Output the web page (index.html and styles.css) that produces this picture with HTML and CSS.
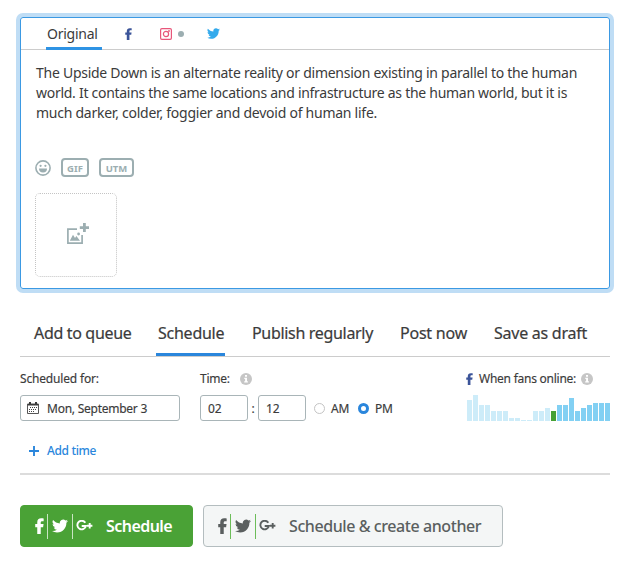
FILE: index.html
```html
<!DOCTYPE html>
<html lang="en">
<head>
<meta charset="utf-8">
<title>Schedule post</title>
<link rel="stylesheet" href="styles.css">
</head>
<body>
<svg class="defs" aria-hidden="true">
  <symbol id="fb" viewBox="0 0 8 14"><path d="M2 14V8H.2V5.200H2V3.700C2 1.400 3.300.2 5.500.2c1 0 1.800.1 2.200.15V2.700H6.400c-1 0-1.300.5-1.300 1.250V5.200h2.500L7.200 8H5.100v6z"/></symbol>
  <symbol id="tw" viewBox="0 0 24 20"><path d="M23.950 2.570a10 10 0 0 1-2.820.77 4.960 4.960 0 0 0 2.160-2.720c-.95.550-2 .95-3.130 1.190a4.920 4.920 0 0 0-8.380 4.480C7.690 6.090 4.070 4.130 1.640 1.160a4.920 4.920 0 0 0 1.520 6.570 4.900 4.900 0 0 1-2.230-.61v.06a4.920 4.920 0 0 0 3.950 4.830 5 5 0 0 1-2.210.08 4.940 4.940 0 0 0 4.600 3.420A9.870 9.870 0 0 1 0 17.540a13.990 13.990 0 0 0 7.550 2.210c9.050 0 14-7.500 14-13.980 0-.21 0-.42-.02-.63a9.940 9.940 0 0 0 2.420-2.570z"/></symbol>
  <symbol id="gp" viewBox="0 0 17 12"><path d="M9.300 2.700A4.300 4.300 0 1 0 9.900 6H5.700M13.700 3v5.400M11 5.700h5.400" fill="none" stroke="currentColor" stroke-width="1.900"/></symbol>
  <symbol id="info" viewBox="0 0 12 12"><circle cx="6" cy="6" r="6" fill="#c6c6c6"/><path d="M5 2h2v1.700H5zM4.300 4.800H7v3.500h.9v1.300H4.200V8.300h.9V6.100h-.8z" fill="#fff"/></symbol>
</svg>
<section class="composer">
  <nav class="networks">
    <span class="network">Original</span>
    <svg class="n-fb"><use href="#fb"/></svg>
    <svg class="n-ig" viewBox="0 0 12 12"><rect x=".6" y=".6" width="10.800" height="10.800" rx="1.300"/><circle cx="6" cy="6" r="2.600"/><circle cx="9" cy="3" r=".35"/></svg>
    <i class="dot"></i>
    <svg class="n-tw"><use href="#tw"/></svg>
  </nav>
  <div class="message">
    <div class="line-1">The Upside Down is an alternate reality or dimension existing in parallel to the human</div>
    <div class="line-2">world. It contains the same locations and infrastructure as the human world, but it is</div>
    <div class="line-3">much darker, colder, foggier and devoid of human life.</div>
  </div>
  <div class="tools">
    <svg class="smile" viewBox="0 0 16 16"><circle cx="8" cy="8" r="7.100" fill="none" stroke="#9caeb1" stroke-width="1.600"/><circle cx="5.600" cy="5.800" r="1.100"/><circle cx="10.400" cy="5.800" r="1.100"/><path d="M4 8.600h8a4 3.900 0 0 1-8 0z"/></svg>
    <span class="tag gif">GIF</span><span class="tag utm">UTM</span>
  </div>
  <div class="drop"><svg viewBox="0 0 23 22"><path d="M11 6.200H1.900v13.900h14.200V12" fill="none" stroke="#9caeb1" stroke-width="1.700"/><path d="M17 0h2.800v3.200H23v2.700h-3.200V9H17V5.900h-3.200V3.200H17zM3.800 17.800l3.200-6 2 3.200 1.400-2 3.600 4.800z"/><circle cx="12.600" cy="11" r="1.400"/></svg></div>
</section>
<nav class="modes">
  <span class="mode queue">Add to queue</span>
  <span class="mode on">Schedule</span>
  <span class="mode regular">Publish regularly</span>
  <span class="mode now">Post now</span>
  <span class="mode draft">Save as draft</span>
</nav>
<section class="schedule">
  <div class="date">
    <div class="label"><span>Scheduled for:</span></div>
    <div class="field"><svg class="cal" viewBox="0 0 12 12"><path d="M.5 2h11v9.500H.5z" fill="none" stroke="#444" stroke-width=".9"/><path d="M1 2h10v1.500H1zM2 0h2v3.500H2zM8 0h2v3.500H8z"/><path d="M3 5.500h7M2 7.500h8M2 9.500h6" stroke="#444" stroke-dasharray="1 1"/></svg><span class="day">Mon, September 3</span></div>
  </div>
  <div class="time">
    <div class="label"><span class="time-label">Time:</span><svg class="info"><use href="#info"/></svg></div>
    <div class="clock"><div class="field num">02</div><span class="colon">:</span><div class="field num">12</div><i class="radio"></i><span class="half">AM</span><i class="radio checked"></i><span class="half">PM</span></div>
  </div>
  <div class="fans">
    <div class="label"><svg class="f-fb"><use href="#fb"/></svg><span class="fans-label">When fans online:</span><svg class="info near"><use href="#info"/></svg></div>
    <div class="chart" id="chart"></div>
  </div>
</section>
<div class="add"><svg viewBox="0 0 10 10"><path d="M5 0v10M0 5h10" stroke="#2a86dc" stroke-width="1.900"/></svg><span>Add time</span></div>
<div class="actions">
  <button class="btn primary"><svg class="b-fb"><use href="#fb"/></svg><i></i><svg class="b-tw"><use href="#tw"/></svg><i></i><svg class="b-gp"><use href="#gp"/></svg><span>Schedule</span></button>
  <button class="btn"><svg class="b-fb"><use href="#fb"/></svg><i></i><svg class="b-tw"><use href="#tw"/></svg><i></i><svg class="b-gp"><use href="#gp"/></svg><span>Schedule &amp; create another</span></button>
</div>
<script src="chart.js"></script>
</body>
</html>
```
FILE: styles.css
```css
* { box-sizing: border-box; }
body { margin: 0; padding: 17px 28px 0 20px; background: #fff; color: #3b3b3b; font-family: "Noto Sans", "Open Sans", sans-serif; font-size: 12px; }
svg { display: block; flex: none; fill: currentColor; }
span { white-space: nowrap; }
.defs { position: absolute; width: 0; height: 0; }
.composer { height: 272px; border: 1px solid #3b99e3; border-radius: 3px; box-shadow: 0 0 0 4px #bfddf5; }
.networks { display: flex; align-items: center; height: 32px; border-bottom: 1px solid #ccc; padding-left: 25px; }
.network { width: 56px; height: 32px; border-bottom: 3px solid #2e93e4; font-size: 14px; line-height: 32px; padding-left: 1px; margin-bottom: -1px; letter-spacing: -.25px; }
.n-fb { width: 7px; height: 12px; color: #3b5499; margin-left: 23px; }
.n-ig { width: 12px; height: 12px; margin-left: 28px; fill: none; stroke: #e8567a; stroke-width: 1.200; }
.dot { width: 6px; height: 6px; border-radius: 50%; background: #9caeb1; margin-left: 6px; }
.n-tw { width: 13px; height: 11px; color: #34aaec; margin-left: 23px; }
.message { padding: 13px 0 0 15px; font-size: 14px; line-height: 20px; height: 108px; white-space: nowrap; }
.line-1 { letter-spacing: -.265px; }
.line-2 { letter-spacing: -.28px; }
.line-3 { letter-spacing: -.25px; }
.tools { display: flex; align-items: center; height: 19px; padding-left: 14px; color: #9caeb1; }
.smile { width: 16px; height: 16px; }
.tag { height: 19px; border: 2px solid #9caeb1; border-radius: 4px; font-size: 9.5px; font-weight: 700; line-height: 17px; text-align: center; }
.gif { width: 28px; margin-left: 10px; }
.utm { width: 35px; margin-left: 10px; }
.drop { width: 82px; height: 84px; margin: 16px 0 0 14px; border: 1px dotted #c4c4c4; border-radius: 5px; display: flex; align-items: center; justify-content: center; color: #9caeb1; padding: 0 0 2px 3px; }
.drop svg { width: 23px; height: 22px; }
.modes { display: flex; height: 41px; margin-top: 27px; border-bottom: 1px solid #ccc; padding-left: 14px; font-size: 16px; line-height: 35px; -webkit-text-stroke: .2px; }
.queue { width: 122px; letter-spacing: -.33px; }
.on { width: 69px; height: 40px; padding-left: 2px; border-bottom: 3px solid #2a86dc; letter-spacing: -.25px; margin-right: 27px; }
.regular { width: 148px; letter-spacing: -.32px; }
.mode.now { width: 94px; letter-spacing: -.22px; }
.draft { letter-spacing: -.25px; }
.schedule { display: flex; height: 64px; letter-spacing: -.17px; -webkit-text-stroke: .15px; }
.label { display: flex; align-items: center; height: 38px; padding-top: 5px; }
.date { width: 180px; }
.time { width: 267px; }
.field { display: flex; align-items: center; width: 160px; height: 26px; border: 1px solid #a9b5b8; border-radius: 3px; padding-left: 6px; }
.cal { width: 12px; height: 12px; margin-right: 8px; }
.day { letter-spacing: -.25px; }
.num { width: 48px; padding-left: 7px; }
.clock { display: flex; align-items: center; }
.colon { width: 10px; text-align: center; }
.time-label { width: 30px; letter-spacing: -.25px; }
.fans-label { width: 98px; letter-spacing: -.25px; }
.half { width: 19px; }
.info { width: 12px; height: 12px; margin-left: 10px; }
.info.near { margin-left: 4px; }
.radio { width: 11px; height: 11px; border: 1px solid #c4c4c4; border-radius: 50%; margin: 0 6px 0 8px; }
.radio.checked { border: 3.500px solid #2a86dc; }
.f-fb { width: 7px; height: 12px; color: #3b5499; margin: 0 6px 0 -1px; }
.chart { display: flex; align-items: flex-end; gap: 1px; height: 26px; }
.chart i { width: 5px; background: #82d0f3; }
.chart i.past { background: #cdecf9; }
.chart i.now { background: #46a135; }
.add { display: flex; align-items: center; height: 54px; padding: 7px 0 0 9px; border-bottom: 2px solid #dcdcdc; color: #2a86dc; font-weight: 500; letter-spacing: -.35px; }
.add svg { width: 10px; height: 10px; margin-right: 8px; }
.actions { display: flex; gap: 10px; margin-top: 30px; }
.btn { display: flex; align-items: center; width: 300px; height: 42px; border: 1px solid #b4bdbf; border-radius: 4px; background: #f4f6f6; color: #5a5f5f; padding: 0 0 0 14px; font: 500 16px "Noto Sans", sans-serif; letter-spacing: -.42px; }
.btn.primary { width: 173px; background: #4aa236; border-color: #4aa236; color: #fff; }
.btn.primary span { font-weight: 600; letter-spacing: -.55px; }
.btn i { width: 1px; height: 25px; background: #6cbd59; }
.btn.primary i { background: #c9e5c3; }
.b-fb { width: 9px; height: 16px; margin-right: 3px; }
.b-tw { width: 16px; height: 14px; margin: 0 4px; }
.b-gp { width: 17px; height: 12px; margin: 0 13px 0 3px; }
```
FILE: chart.js
```js
const heights = [21, 26, 16, 16, 10, 10, 10, 3, 3, 1, 1, 10, 10, 13, 10, 16, 16, 23, 10, 13, 16, 18, 18, 18];
const chart = document.getElementById("chart");
heights.forEach((h, i) => {
  const bar = document.createElement("i");
  if (i < 14) bar.className = "past";
  if (i === 14) bar.className = "now";
  bar.style.height = h + "px";
  chart.append(bar);
});
```
